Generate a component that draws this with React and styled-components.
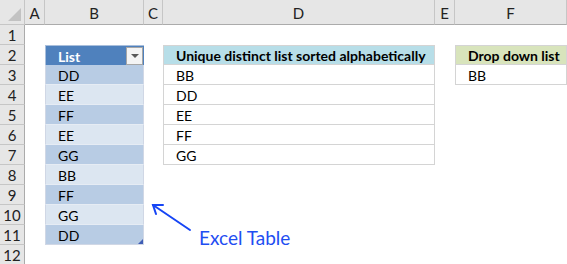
import React from 'react';
import styled, { createGlobalStyle } from 'styled-components';

const GlobalStyle = createGlobalStyle`
  html, body {
    margin: 0;
    padding: 0;
    background: #ffffff;
  }
  body {
    font-family: Lato, "Liberation Sans", sans-serif;
  }
`;

const COLS = ['A', 'B', 'C', 'D', 'E', 'F'];
const LIST = ['DD', 'EE', 'FF', 'EE', 'GG', 'BB', 'FF', 'GG', 'DD'];
const UNIQUE = ['BB', 'DD', 'EE', 'FF', 'GG'];

const Sheet = styled.div`
  position: relative;
  display: grid;
  grid-template-columns: 25px 20px 99px 19px 272px 20px 112px;
  grid-template-rows: 25px repeat(12, 20px);
  width: 567px;
  height: 264px;
  overflow: hidden;
  font-size: 14px;
  color: #000;
`;

const Corner = styled.div`
  grid-column: 1;
  grid-row: 1;
  background: #e6e6e6;
  border-right: 1px solid #c6c6c6;
  border-bottom: 1px solid #c6c6c6;
  box-sizing: border-box;
  position: relative;
  &::after {
    content: '';
    position: absolute;
    right: 3px;
    bottom: 3px;
    border-left: 13px solid transparent;
    border-bottom: 13px solid #c2c2c2;
  }
`;

const ColHead = styled.div`
  grid-row: 1;
  grid-column: ${p => p.$col};
  background: #e6e6e6;
  border-right: 1px solid #c6c6c6;
  border-bottom: 1px solid #ababab;
  box-sizing: border-box;
  display: flex;
  align-items: center;
  justify-content: center;
  padding-top: 2px;
  font-size: 15px;
  color: #222;
`;

const RowHead = styled.div`
  grid-column: 1;
  grid-row: ${p => p.$row};
  background: #e6e6e6;
  border-right: 1px solid #ababab;
  border-bottom: 1px solid #c6c6c6;
  box-sizing: border-box;
  display: flex;
  align-items: center;
  justify-content: center;
  font-size: 15px;
  color: #222;
`;

const Cell = styled.div`
  grid-column: ${p => p.$col};
  grid-row: ${p => p.$row};
  box-sizing: border-box;
  display: flex;
  align-items: center;
  padding: 1px 0 0 12px;
  white-space: nowrap;
  overflow: hidden;
`;

const ListCell = styled(Cell)`
  background: ${p => (p.$dark ? '#b8cce4' : '#dce6f1')};
  border-left: 1px solid #d0d7e5;
  border-right: 1px solid #d0d7e5;
  border-bottom: 1px solid ${p => (p.$last ? '#d0d7e5' : '#e6ecf4')};
  position: relative;
`;

const ListHeader = styled(Cell)`
  background: #4f81bd;
  color: #ffffff;
  font-weight: 700;
  border-top: 1px solid #a9bfdc;
  border-left: 1px solid #a9bfdc;
  justify-content: space-between;
  padding-right: 1px;
`;

const FilterButton = styled.div`
  width: 17px;
  height: 18px;
  box-sizing: border-box;
  background: #f4f4f4;
  border: 1px solid #a6a6a6;
  display: flex;
  align-items: center;
  justify-content: center;
  &::after {
    content: '';
    border-left: 4px solid transparent;
    border-right: 4px solid transparent;
    border-top: 4px solid #595959;
  }
`;

const ResizeHandle = styled.span`
  position: absolute;
  right: 0;
  bottom: 0;
  border-left: 5px solid transparent;
  border-bottom: 5px solid #3f5db5;
`;

const BoxCell = styled(Cell)`
  background: ${p => p.$fill || '#ffffff'};
  font-weight: ${p => (p.$bold ? 700 : 400)};
  border-left: 1px solid #d4d4d4;
  border-right: 1px solid #d4d4d4;
  border-bottom: 1px solid #d4d4d4;
  border-top: ${p => (p.$top ? '1px solid #d4d4d4' : 'none')};
`;

const Note = styled.div`
  grid-column: 5;
  grid-row: 12 / span 2;
  padding: 1px 0 0 36px;
  font-size: 19px;
  line-height: 23px;
  color: #1f4ef2;
`;

const Arrow = styled.svg`
  position: absolute;
  left: 0;
  top: 0;
  pointer-events: none;
`;

export default function App() {
  return (
    <>
      <GlobalStyle />
      <Sheet>
        <Corner />
        {COLS.map((c, i) => (
          <ColHead key={c} $col={i + 2}>{c}</ColHead>
        ))}
        {Array.from({ length: 12 }, (_, i) => (
          <RowHead key={i} $row={i + 2}>{i + 1}</RowHead>
        ))}

        <ListHeader $col={3} $row={3}>
          List
          <FilterButton />
        </ListHeader>
        {LIST.map((v, i) => (
          <ListCell key={i} $col={3} $row={i + 4} $dark={i % 2 === 0} $last={i === LIST.length - 1}>
            {v}
            {i === LIST.length - 1 && <ResizeHandle />}
          </ListCell>
        ))}

        <BoxCell $col={5} $row={3} $fill="#b7dee8" $bold $top>
          Unique distinct list sorted alphabetically
        </BoxCell>
        {UNIQUE.map((v, i) => (
          <BoxCell key={v} $col={5} $row={i + 4}>{v}</BoxCell>
        ))}

        <BoxCell $col={7} $row={3} $fill="#d8e4bc" $bold $top>
          Drop down list
        </BoxCell>
        <BoxCell $col={7} $row={4}>BB</BoxCell>

        <Note>Excel Table</Note>

        <Arrow width="567" height="264" viewBox="0 0 567 264">
          <g stroke="#1645f5" strokeWidth="2" fill="none" strokeLinecap="round">
            <line x1="190" y1="230" x2="153" y2="205" />
            <polyline points="163,205 153,205 156,214" />
          </g>
        </Arrow>
      </Sheet>
    </>
  );
}
